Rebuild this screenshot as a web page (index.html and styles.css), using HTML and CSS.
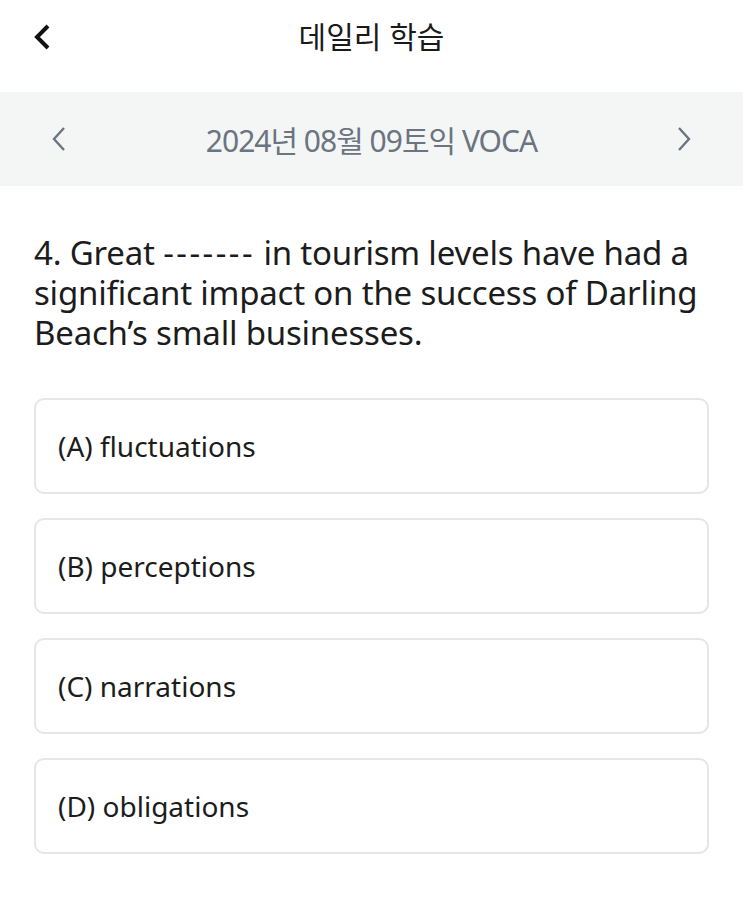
FILE: index.html
```html
<!DOCTYPE html>
<html lang="ko">
<head>
<meta charset="utf-8">
<link rel="stylesheet" href="styles.css">
</head>
<body>
<header class="topbar">
  <svg class="back" width="20" height="28" viewBox="0 0 20 28"><path d="M16 3 L5 14 L16 25" fill="none" stroke="#111" stroke-width="4" stroke-linejoin="miter"/></svg>
  <h1 class="title">데일리 학습</h1>
</header>
<nav class="datebar">
  <svg class="nav-arrow" width="18" height="28" viewBox="0 0 18 28"><path d="M14 3 L4 14 L14 25" fill="none" stroke="#6b7480" stroke-width="2.4"/></svg>
  <div class="date">2024년 08월 09토익 VOCA</div>
  <svg class="nav-arrow" width="18" height="28" viewBox="0 0 18 28"><path d="M4 3 L14 14 L4 25" fill="none" stroke="#6b7480" stroke-width="2.4"/></svg>
</nav>
<main class="content">
  <p class="question">4. Great <span class="blank">-------</span> in tourism levels have had a significant impact on the success of Darling Beach’s small businesses.</p>
  <ul class="options">
    <li class="option">(A) fluctuations</li>
    <li class="option">(B) perceptions</li>
    <li class="option">(C) narrations</li>
    <li class="option">(D) obligations</li>
  </ul>
</main>
</body>
</html>
```
FILE: styles.css
```css
* { box-sizing: border-box; }
html, body { margin: 0; padding: 0; background: #fff; }
body {
  font-family: "Noto Sans", "Noto Sans CJK KR", sans-serif;
  color: #1c1c1c;
  width: 743px;
}
.topbar {
  height: 92px;
  display: flex;
  align-items: center;
  justify-content: center;
  position: relative;
}
.back {
  position: absolute;
  left: 32px;
  top: 23px;
}
.title {
  margin: 0;
  font-size: 30px;
  font-weight: 400;
  color: #1a1a1a;
  letter-spacing: 0;
  padding-bottom: 22px;
}
.datebar {
  height: 94px;
  background: #f4f6f6;
  display: flex;
  align-items: center;
  justify-content: space-between;
  padding: 0 50px 0 50px;
}
.date {
  font-size: 30px;
  color: #6b7480;
  letter-spacing: -1px;
}
.content {
  padding: 0 34px;
}
.question {
  margin: 47px 0 45px;
  font-size: 33px;
  line-height: 40px;
  letter-spacing: -0.2px;
  color: #1c1c1c;
}
.blank {
  letter-spacing: 2.5px;
}
.options {
  list-style: none;
  margin: 0;
  padding: 0;
  display: flex;
  flex-direction: column;
  gap: 24px;
}
.option {
  height: 96px;
  border: 2px solid #e4e6e9;
  border-radius: 10px;
  display: flex;
  align-items: center;
  padding-left: 22px;
  font-size: 28px;
  color: #1c1c1c;
  letter-spacing: 0;
}
```
